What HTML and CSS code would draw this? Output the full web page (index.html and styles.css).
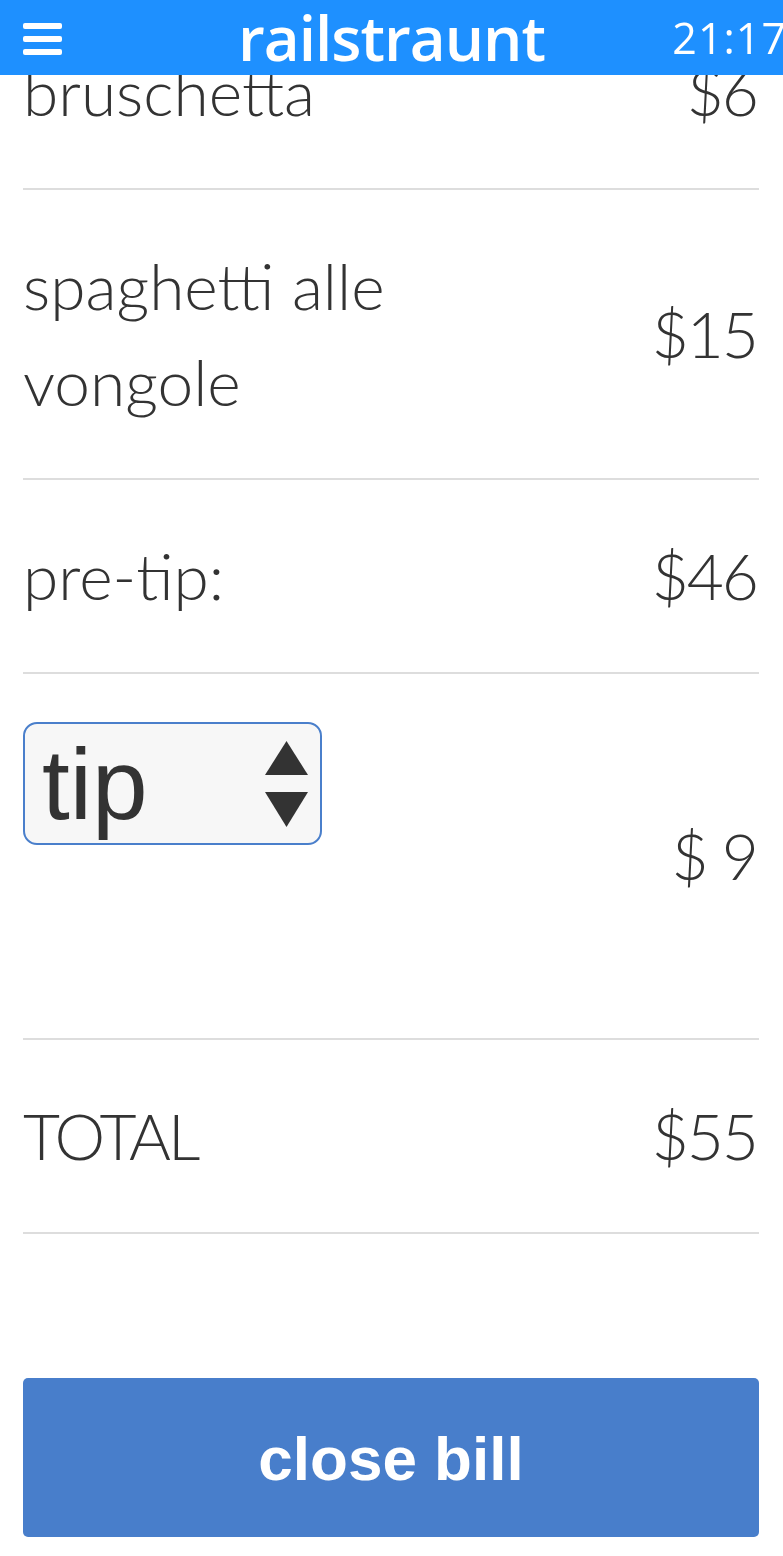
FILE: index.html
```html
<!DOCTYPE html>
<html lang="en">
<head>
<meta charset="utf-8">
<title>railstraunt</title>
<link rel="stylesheet" href="styles.css">
</head>
<body>
<header class="topbar">
  <button class="menu" aria-label="menu"><span></span><span></span><span></span></button>
  <h1 class="brand">railstraunt</h1>
  <span class="clock">21:17</span>
</header>
<main class="bill">
  <ul class="items">
    <li class="row"><span class="name">bruschetta</span><span class="price">$6</span></li>
    <li class="row"><span class="name">spaghetti alle vongole</span><span class="price">$15</span></li>
    <li class="row"><span class="name">pre-tip:</span><span class="price">$46</span></li>
    <li class="row">
      <div class="tip-col">
        <div class="select">
          <span class="select-label">tip</span>
          <svg class="select-arrows" width="43" height="86" viewBox="0 0 43 86" aria-hidden="true">
            <polygon points="21.5,0 43,34 0,34" fill="#333"/>
            <polygon points="0,51 43,51 21.5,86" fill="#333"/>
          </svg>
        </div>
      </div>
      <span class="price">$ 9</span>
    </li>
    <li class="row"><span class="name caps">TOTAL</span><span class="price">$55</span></li>
  </ul>
  <button class="close-btn">close bill</button>
</main>
</body>
</html>
```
FILE: styles.css
```css
body {
  margin: 0;
  background: #fff;
  color: #333;
  font-family: Lato, "Noto Sans", sans-serif;
  font-weight: 300;
}

.topbar {
  position: fixed;
  top: 0;
  left: 0;
  right: 0;
  height: 75px;
  background: #1e90ff;
  display: grid;
  grid-template-columns: 1fr auto 1fr;
  align-items: center;
  z-index: 10;
}

.menu {
  justify-self: start;
  display: flex;
  flex-direction: column;
  gap: 7px;
  padding: 0;
  margin: 2px 0 0 23px;
  border: 0;
  background: none;
}

.menu span {
  display: block;
  width: 39px;
  height: 6px;
  border-radius: 2px;
  background: #fff;
}

.brand {
  margin: 0 0 2px;
  color: #fff;
  font: 600 62px/1 "Open Sans", sans-serif;
  letter-spacing: -1px;
}

.clock {
  justify-self: end;
  color: #fff;
  font: 400 43px/1 "Open Sans", sans-serif;
  letter-spacing: 1px;
  margin-right: -4px;
}

.bill {
  margin-top: -4px;
  padding: 0 24px 19px 23px;
}

.items {
  list-style: none;
  margin: 0;
  padding: 0;
}

.row {
  display: flex;
  justify-content: space-between;
  align-items: center;
  padding: 48px 0;
  border-bottom: 2px solid #ddd;
  font-size: 64px;
  line-height: 96px;
}

.name {
  width: 60%;
}

.caps {
  letter-spacing: -3px;
}

.price {
  letter-spacing: -2px;
  padding-right: 2px;
}

.tip-col {
  min-height: 268px;
}

.select {
  box-sizing: border-box;
  width: 299px;
  height: 123px;
  border: 2px solid #4a7fcb;
  border-radius: 14px;
  background: #f7f7f7;
  display: flex;
  align-items: center;
  justify-content: space-between;
  padding: 0 12px 0 17px;
  font: 400 100px/1 "Liberation Sans", Arial, sans-serif;
  color: #333;
}

.close-btn {
  display: block;
  width: 100%;
  height: 159px;
  margin-top: 144px;
  padding-top: 4px;
  border: 0;
  border-radius: 5px;
  background: #487ecb;
  color: #fff;
  font: 700 62px/1 "Liberation Sans", Arial, sans-serif;
}
```
